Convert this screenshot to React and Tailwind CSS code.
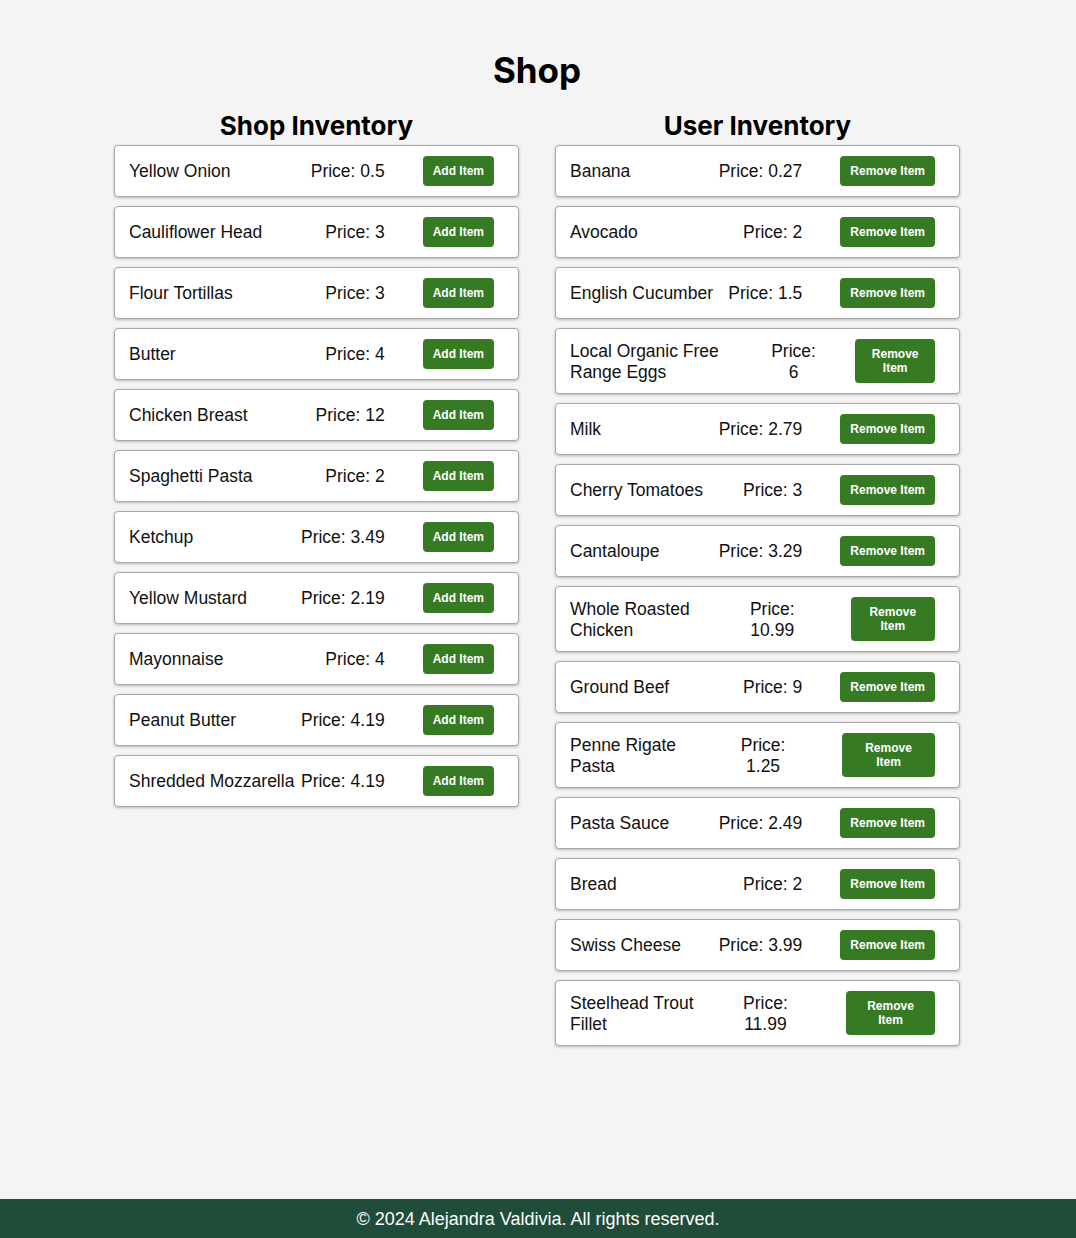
const shopItems = [
  { name: "Yellow Onion", price: 0.5 },
  { name: "Cauliflower Head", price: 3 },
  { name: "Flour Tortillas", price: 3 },
  { name: "Butter", price: 4 },
  { name: "Chicken Breast", price: 12 },
  { name: "Spaghetti Pasta", price: 2 },
  { name: "Ketchup", price: 3.49 },
  { name: "Yellow Mustard", price: 2.19 },
  { name: "Mayonnaise", price: 4 },
  { name: "Peanut Butter", price: 4.19 },
  { name: "Shredded Mozzarella", price: 4.19 },
];

const userItems = [
  { name: "Banana", price: 0.27 },
  { name: "Avocado", price: 2 },
  { name: "English Cucumber", price: 1.5 },
  { name: "Local Organic Free Range Eggs", price: 6 },
  { name: "Milk", price: 2.79 },
  { name: "Cherry Tomatoes", price: 3 },
  { name: "Cantaloupe", price: 3.29 },
  { name: "Whole Roasted Chicken", price: 10.99 },
  { name: "Ground Beef", price: 9 },
  { name: "Penne Rigate Pasta", price: 1.25 },
  { name: "Pasta Sauce", price: 2.49 },
  { name: "Bread", price: 2 },
  { name: "Swiss Cheese", price: 3.99 },
  { name: "Steelhead Trout Fillet", price: 11.99 },
];

function ItemRow({ item, label }) {
  return (
    <div className="flex items-center bg-white border border-[#a9a9a9] rounded-[4px] shadow-[0_1px_3px_rgba(0,0,0,0.25)] px-[14px] text-[17.5px] leading-[21px] text-[#111]">
      <span className="grow pt-[1px]">{item.name}</span>
      <span className="text-center mr-[28px] pt-[1px]">Price: {item.price}</span>
      <button className="m-[10px] bg-[#367b23] text-white font-bold text-[12px] leading-[14px] px-[10px] py-2 rounded-[4px] font-['Liberation_Sans',Arial,sans-serif]">
        {label}
      </button>
    </div>
  );
}

function Column({ title, items, label }) {
  return (
    <div className="w-[405px]">
      <h2 className="text-center font-['Inter',sans-serif] font-bold text-[26px] leading-[30px] text-black mb-[4px]">{title}</h2>
      <div className="flex flex-col gap-[9px]">
        {items.map((item) => (
          <ItemRow key={item.name} item={item} label={label} />
        ))}
      </div>
    </div>
  );
}

export default function App() {
  return (
    <div className="min-h-screen flex flex-col bg-[#f4f4f4] font-['Liberation_Sans',Arial,sans-serif]">
      <main className="flex-1">
        <h1 className="text-center font-['Inter',sans-serif] font-bold text-[35px] leading-[41px] mt-[50px] pr-[2px] text-black">Shop</h1>
        <div className="flex justify-center gap-[36px] mt-[20px] pr-[2px]">
          <Column title="Shop Inventory" items={shopItems} label="Add Item" />
          <Column title="User Inventory" items={userItems} label="Remove Item" />
        </div>
      </main>
      <footer className="bg-[#1f4d39] text-white text-center text-[18px] leading-[19px] pt-[11px] pb-[9px]">
        © 2024 Alejandra Valdivia. All rights reserved.
      </footer>
    </div>
  );
}
